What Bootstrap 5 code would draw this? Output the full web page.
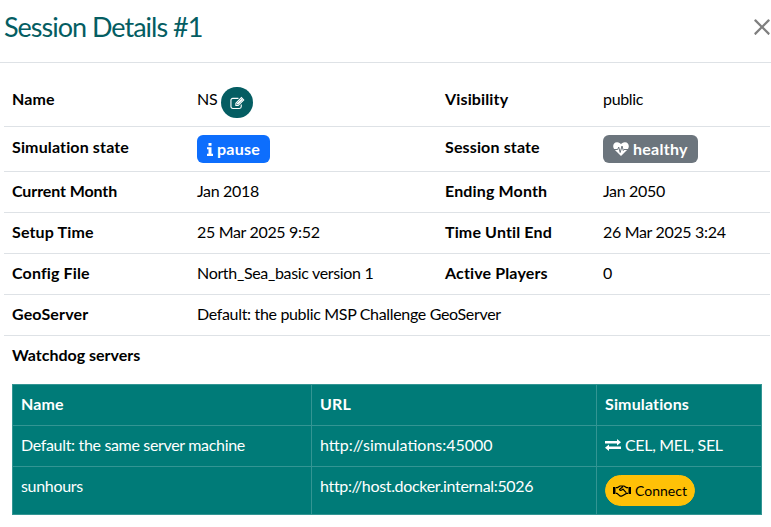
<!DOCTYPE html>
<html lang="en">
<head>
<meta charset="utf-8">
<meta name="viewport" content="width=device-width, initial-scale=1">
<title>Session Details</title>
<link href="https://cdn.jsdelivr.net/npm/bootstrap@5.3.0/dist/css/bootstrap.min.css" rel="stylesheet">
<style>
body{font-family:Lato,"Open Sans",sans-serif;color:#000;width:771px;overflow:hidden}
.session-head{height:63px;padding:0 0 10px 4px}
.session-title{color:#045d62;font-size:27px;line-height:33px;letter-spacing:-1px}
.btn-close.session-close{padding:0;width:18px;height:18px;margin:1px 0 0;background-size:18px}
.session-body{padding:16px 1px 0 4px}
.session-table{table-layout:fixed;width:766px;--bs-table-color:#000}
.session-table tr:not(.name-row)>*{padding-top:7px;padding-bottom:9px}
.session-table tr.state-row>*{padding-top:8px;padding-bottom:8px}
.session-table th,.session-table strong{letter-spacing:.14px}
.session-table strong{letter-spacing:0}
.session-table th.tight{letter-spacing:-.1px}
.session-table td{letter-spacing:-.33px}
.session-table td.wide-url{letter-spacing:0}
.name-row{height:47px}
.state-row{height:45px}
.state{font-size:16px;line-height:16px;height:28px;padding:6px 10px;border-radius:6px;letter-spacing:.27px}
.servers{table-layout:fixed;width:749px;margin-top:17px;--bs-table-bg:#007b78;--bs-table-color:#fff;--bs-table-border-color:#339593;border-color:#339593}
.btn-edit{width:32px;height:31px;background:#045d62;color:#fff;border-radius:16px;padding:0}
.btn-edit:hover{background:#034a4e}
.btn-connect{height:31px;width:90px;border-radius:16px;padding:0;font-size:14px;letter-spacing:0}
.session-table .servers td.connect-cell{padding-top:8px;padding-bottom:8px}
svg{flex:none}
</style>
</head>
<body>
<header class="session-head d-flex align-items-center justify-content-between border-bottom">
<h3 class="session-title m-0 fw-normal">Session Details #1</h3>
<button class="btn-close session-close" aria-label="Close"></button>
</header>
<main class="session-body">
<table class="table session-table mb-0">
<colgroup><col style="width:185px"><col style="width:248px"><col style="width:158px"><col style="width:175px"></colgroup>
<tbody>
<tr class="name-row"><th>Name</th><td><div class="d-flex gap-1"><span>NS</span><button class="btn btn-edit d-flex align-items-center justify-content-center" aria-label="Edit"><svg width="15" height="14" viewBox="0 0 16 14" fill="none" stroke="#fff" stroke-width="1.2"><path d="M12 8.500v2.300a2 2 0 0 1-2 2H3a2 2 0 0 1-2-2V4a2 2 0 0 1 2-2h6"/><path d="M6.300 9.700V7.200L12.200 1.300l2.400 2.400-5.900 6z"/><path stroke-width="1.800" d="M7.700 8.300l5.500-5.500"/></svg></button></div></td><th>Visibility</th><td>public</td></tr>
<tr class="state-row"><th>Simulation state</th><td><span class="state badge text-bg-primary d-inline-flex align-items-center align-top gap-1"><svg width="6" height="13" viewBox="0 0 6 13" fill="#fff"><path d="M1.500 0h3v2.800h-3zM0 4.200h4.500v6.600H6V13H0v-2.200h1.500V6.300H0z"/></svg>pause</span></td><th>Session state</th><td><span class="state badge text-bg-secondary d-inline-flex align-items-center align-top gap-1"><svg width="16" height="14" viewBox="0 0 16 14"><path fill="#fff" d="M8 14L1.200 7.300C-.8 4.500.2.300 4 .2 6 .1 7.300 1.300 8 2.300 8.700 1.300 10 .1 12 .2c3.800.1 4.800 4.300 2.800 7.100z"/><path fill="none" stroke="#6c757d" d="M0 7.500h4.700l1-2.500 1.500 5.500L9 4l1.300 4.500.7-1h5"/></svg>healthy</span></td></tr>
<tr><th class="tight">Current Month</th><td>Jan 2018</td><th>Ending Month</th><td>Jan 2050</td></tr>
<tr><th>Setup Time</th><td>25 Mar 2025 9:52</td><th>Time Until End</th><td>26 Mar 2025 3:24</td></tr>
<tr><th>Config File</th><td>North_Sea_basic version 1</td><th>Active Players</th><td>0</td></tr>
<tr><th>GeoServer</th><td colspan="3">Default: the public MSP Challenge GeoServer</td></tr>
<tr><td colspan="4" class="border-0"><strong>Watchdog servers</strong>
<table class="table table-bordered servers mb-0">
<colgroup><col style="width:299px"><col style="width:285px"><col style="width:165px"></colgroup>
<thead><tr><th>Name</th><th>URL</th><th>Simulations</th></tr></thead>
<tbody>
<tr><td>Default: the same server machine</td><td class="wide-url">http://simulations:45000</td><td><span class="d-flex align-items-center gap-1"><svg width="16" height="12" viewBox="0 0 16 12" fill="#fff"><path d="M0 2h12V0l4 3.200-4 3.200V4.500H0zM16 7.500H4V5.600L0 8.800 4 12v-2h12z"/></svg>CEL, MEL, SEL</span></td></tr>
<tr><td>sunhours</td><td>http://host.docker.internal:5026</td><td class="connect-cell"><button class="btn btn-warning btn-connect d-flex align-items-center justify-content-center gap-1"><svg width="18" height="12" viewBox="0 0 18 12" fill="none" stroke="#000" stroke-width="1.200"><path fill="#000" stroke="none" d="M0 2h2.500v7H0zM15.500 2H18v7h-2.500z"/><path d="M3 2.600h1.500L7 1h4l2.500 1.600H15M3 8.400h1l3 2.500q1 .5 2 0l4.500-2.500H15M10 1.500L6.500 4.500c.5 1.500 2 1.200 3.500-.4l3.200 3.600"/></svg>Connect</button></td></tr>
</tbody></table></td></tr>
</tbody></table>
</main>
<script src="https://cdn.jsdelivr.net/npm/bootstrap@5.3.0/dist/js/bootstrap.bundle.min.js"></script>
</body>
</html>
